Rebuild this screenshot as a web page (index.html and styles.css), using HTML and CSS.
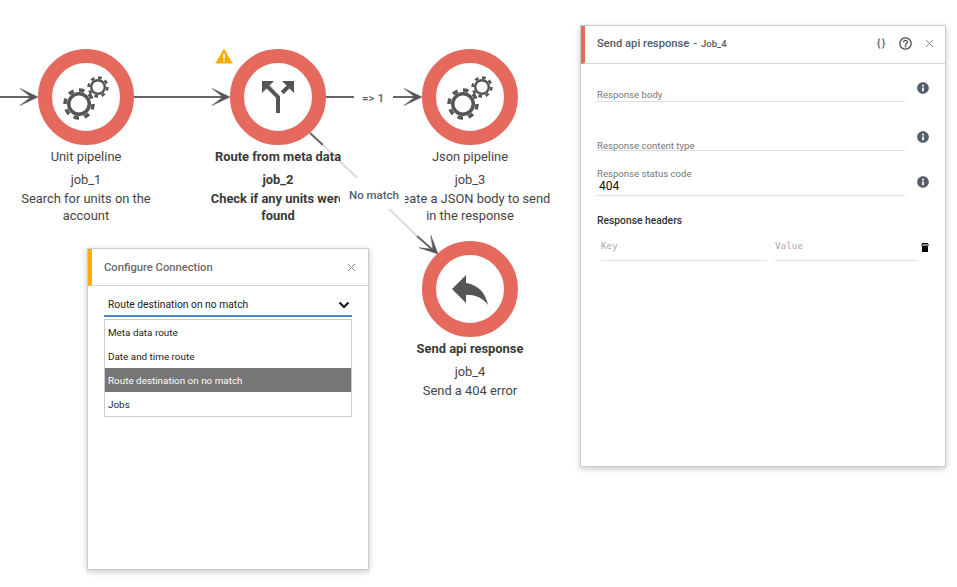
FILE: index.html
```html
<!DOCTYPE html>
<html lang="en">
<head>
<meta charset="utf-8">
<title>Pipeline editor</title>
<link rel="stylesheet" href="styles.css">
</head>
<body>
<main class="canvas">
  <svg class="edges" width="957" height="587" viewBox="0 0 957 587" aria-hidden="true">
    <defs>
      <path id="arrow" d="M0 0L-18-8.500-7 0-18 8.500Z"/>
      <g id="gears">
        <circle cx="24" cy="35" r="10.250" class="gear-ring" stroke-width="3.500"/>
        <circle cx="24" cy="35" r="14" class="gear-teeth" stroke-width="3.500" pathLength="16" stroke-dasharray="1 1"/>
        <circle cx="43" cy="18" r="6.800" class="gear-ring" stroke-width="2.400"/>
        <circle cx="43" cy="18" r="9.400" class="gear-teeth" stroke-width="2.600" pathLength="16" stroke-dasharray="1 1"/>
      </g>
    </defs>
    <line class="edge" x1="0" y1="97" x2="34" y2="97"/>
    <use href="#arrow" class="tip" transform="translate(38 97)"/>
    <line class="edge" x1="134" y1="97" x2="226" y2="97"/>
    <use href="#arrow" class="tip" transform="translate(230 97)"/>
    <line class="edge" x1="326" y1="97" x2="354" y2="97"/>
    <line class="edge" x1="393" y1="97" x2="418" y2="97"/>
    <use href="#arrow" class="tip" transform="translate(422 97)"/>
    <line class="edge" x1="310" y1="133" x2="323" y2="145"/>
    <line class="edge-faded" x1="323" y1="145" x2="417" y2="236"/>
    <line class="edge" x1="417" y1="236" x2="434" y2="251"/>
    <use href="#arrow" class="tip" transform="translate(438 254) rotate(43.6)"/>
  </svg>

  <article class="node node-1">
    <div class="ring">
      <svg class="node-icon" width="64" height="56" viewBox="0 0 64 56" aria-hidden="true">
        <use href="#gears"/>
      </svg>
    </div>
    <h3 class="node-name">Unit pipeline</h3>
    <p class="node-id">job_1</p>
    <p class="node-desc">Search for units on the account</p>
  </article>

  <article class="node node-2 is-selected">
    <div class="ring">
      <svg width="48" height="48" viewBox="0 0 24 24" class="glyph" aria-hidden="true">
        <path d="M14 4l2.290 2.290-2.880 2.880 1.420 1.420 2.880-2.880L20 10V4zm-4 0H4v6l2.290-2.290 4.710 4.700V20h2v-8.410l-5.290-5.300z"/>
      </svg>
    </div>
    <h3 class="node-name">Route from meta data</h3>
    <p class="node-id">job_2</p>
    <p class="node-desc">Check if any units were found</p>
  </article>

  <article class="node node-3">
    <div class="ring">
      <svg class="node-icon" width="64" height="56" viewBox="0 0 64 56" aria-hidden="true">
        <use href="#gears"/>
      </svg>
    </div>
    <h3 class="node-name">Json pipeline</h3>
    <p class="node-id">job_3</p>
    <p class="node-desc">Create a JSON body to send in the response</p>
  </article>

  <article class="node node-4">
    <div class="ring">
      <svg width="48" height="48" viewBox="0 0 24 24" class="glyph" aria-hidden="true">
        <path d="M10 9V5l-7 7 7 7v-4.100c5 0 8.500 1.600 11 5.100-1-5-4-10-11-11z"/>
      </svg>
    </div>
    <h3 class="node-name strong">Send api response</h3>
    <p class="node-id">job_4</p>
    <p class="node-desc">Send a 404 error</p>
  </article>

  <svg class="warning" width="18" height="16" viewBox="0 0 18 16" aria-hidden="true">
    <path d="M9 0.500L17.800 15.500H0.200Z" fill="#ffab00"/>
    <rect x="8.100" y="5.500" width="1.800" height="5" fill="#fff"/>
    <rect x="8.100" y="11.600" width="1.800" height="1.800" fill="#fff"/>
  </svg>

  <span class="edge-label label-one">=&gt; 1</span>
  <span class="edge-label label-nomatch">No match</span>

  <section class="panel connection-panel">
    <header class="panel-head accent-amber">
      <h2 class="panel-title muted">Configure Connection</h2>
      <svg class="close" width="9" height="9" viewBox="0 0 9 9" aria-hidden="true"><path d="M1 1l7 7M8 1L1 8"/></svg>
    </header>
    <div class="connection-body">
      <div class="select">
        <span>Route destination on no match</span>
        <svg width="12" height="8" viewBox="0 0 12 8" aria-hidden="true"><path class="chevron" d="M1.500 1.500L6 6l4.500-4.500"/></svg>
      </div>
      <ul class="options">
        <li>Meta data route</li>
        <li>Date and time route</li>
        <li class="active">Route destination on no match</li>
        <li>Jobs</li>
      </ul>
    </div>
  </section>

  <section class="panel details-panel">
    <header class="panel-head accent-red details-head">
      <h2 class="panel-title">Send api response<span class="title-sep">-</span><small class="title-job">Job_4</small></h2>
      <div class="head-tools">
        <span class="braces">{}</span>
        <svg width="15" height="15" viewBox="0 0 24 24" class="tool-help" aria-hidden="true"><path d="M11 18h2v-2h-2v2zm1-16C6.480 2 2 6.480 2 12s4.480 10 10 10 10-4.480 10-10S17.520 2 12 2zm0 18c-4.410 0-8-3.590-8-8s3.590-8 8-8 8 3.590 8 8-3.590 8-8 8zm0-14c-2.210 0-4 1.790-4 4h2c0-1.100.9-2 2-2s2 .9 2 2c0 2-3 1.750-3 5h2c0-2.250 3-2.500 3-5 0-2.210-1.790-4-4-4z"/></svg>
        <svg class="close" width="9" height="9" viewBox="0 0 9 9" aria-hidden="true"><path d="M1 1l7 7M8 1L1 8"/></svg>
      </div>
    </header>
    <div class="details-body">
      <div class="row">
        <div class="field field-a"><label>Response body</label></div>
        <svg class="info info-a" width="14" height="14" viewBox="0 0 24 24" aria-hidden="true"><path d="M12 2C6.480 2 2 6.480 2 12s4.480 10 10 10 10-4.480 10-10S17.520 2 12 2zm1.500 15.500h-3v-6.500h3v6.500zm0-8h-3V6.500h3v3z"/></svg>
      </div>
      <div class="row">
        <div class="field field-b"><label>Response content type</label></div>
        <svg class="info info-b" width="14" height="14" viewBox="0 0 24 24" aria-hidden="true"><path d="M12 2C6.480 2 2 6.480 2 12s4.480 10 10 10 10-4.480 10-10S17.520 2 12 2zm1.500 15.500h-3v-6.500h3v6.500zm0-8h-3V6.500h3v3z"/></svg>
      </div>
      <div class="row">
        <div class="field field-c"><label>Response status code</label><span class="value">404</span></div>
        <svg class="info info-c" width="14" height="14" viewBox="0 0 24 24" aria-hidden="true"><path d="M12 2C6.480 2 2 6.480 2 12s4.480 10 10 10 10-4.480 10-10S17.520 2 12 2zm1.500 15.500h-3v-6.500h3v6.500zm0-8h-3V6.500h3v3z"/></svg>
      </div>
      <h4 class="section-title">Response headers</h4>
      <div class="kv-row">
        <span class="kv kv-key">Key</span>
        <span class="kv kv-value">Value</span>
        <svg class="trash" width="8" height="9" viewBox="0 0 8 9" aria-hidden="true"><path d="M1 0h6v1H1zM0 1.500h8v1H0zM1 3h6v6H1z"/></svg>
      </div>
    </div>
  </section>
</main>
</body>
</html>
```
FILE: styles.css
```css
* { box-sizing: border-box; }

html, body {
  margin: 0;
  padding: 0;
  background: #fff;
}

body {
  font-family: Roboto, "Liberation Sans", sans-serif;
  color: #444;
}

.canvas {
  position: relative;
  width: 957px;
  height: 587px;
  overflow: hidden;
}

.edges {
  position: absolute;
  left: 0;
  top: 0;
}

.edge {
  stroke: #666;
  stroke-width: 2;
}

.edge-faded {
  stroke: #ddd;
  stroke-width: 2;
}

.tip {
  fill: #555;
  stroke: #555;
  stroke-width: 0.5;
}

.gear-ring,
.gear-teeth {
  fill: none;
  stroke: #555;
}

/* Diagram nodes */
.node {
  position: absolute;
  width: 160px;
  text-align: center;
  font-size: 12.900px;
  line-height: 17px;
}

.node-1 { left: 6px; top: 49px; }
.node-2 { left: 198px; top: 49px; }
.node-3 { left: 386px; top: 49px; width: 168px; }
.node-4 { left: 390px; top: 241px; }

.ring {
  width: 96px;
  height: 96px;
  margin: 0 auto;
  border: 14px solid #e5695c;
  border-radius: 50%;
  background: #fff;
  display: flex;
  align-items: center;
  justify-content: center;
}

.glyph { fill: #555; flex: none; }
.node-icon { flex: none; margin-left: 2px; }

.node-name {
  margin: 3px 0 0;
  font-size: 12.900px;
  font-weight: 400;
  line-height: 17px;
}

.node-id {
  margin: 6px 0 0;
}

.node-desc {
  margin: 2px 0 0;
}

.is-selected .node-name,
.is-selected .node-id,
.is-selected .node-desc,
.node-name.strong {
  font-weight: 700;
  color: #3a3a3a;
}

.warning {
  position: absolute;
  left: 215px;
  top: 48px;
}

.edge-label {
  position: absolute;
  background: #fff;
  color: #55606c;
  font-size: 11.500px;
  font-weight: 500;
  text-align: center;
}

.label-one {
  left: 354px;
  top: 88px;
  width: 39px;
  height: 20px;
  line-height: 20px;
  padding-right: 1px;
}

.label-nomatch {
  left: 340px;
  top: 178px;
  width: 65px;
  height: 31px;
  line-height: 35px;
  padding-left: 3px;
}

/* Floating panels */
.panel {
  position: absolute;
  background: #fff;
  border: 1px solid #ccc;
  box-shadow: 0 2px 6px rgba(0, 0, 0, 0.22);
}

.connection-panel {
  left: 87px;
  top: 248px;
  width: 282px;
  height: 322px;
}

.details-panel {
  left: 580px;
  top: 25px;
  width: 366px;
  height: 442px;
}

.panel-head {
  display: flex;
  align-items: center;
  justify-content: space-between;
  height: 37px;
  border-bottom: 1px solid #d6d6d6;
  border-left: 4px solid;
  padding: 0 12px 0 12px;
}

.accent-amber { border-left-color: #ffab00; }
.accent-red { border-left-color: #e5695c; }

.details-head {
  height: 38px;
  padding-right: 11px;
  padding-bottom: 2px;
}

.panel-title {
  margin: 0;
  font-size: 11.200px;
  font-weight: 500;
  color: #4f5b66;
  white-space: nowrap;
}

.panel-title.muted { color: #6a6a6a; }

.title-sep {
  margin: 0 4px 0 4px;
}

.title-job {
  font-size: 9.500px;
  font-weight: 500;
}

.close {
  fill: none;
  stroke: #888;
  stroke-width: 1;
  flex: none;
}

.head-tools {
  display: flex;
  align-items: center;
}

.braces {
  font-size: 11px;
  font-weight: 500;
  color: #566878;
  letter-spacing: 1.500px;
  margin-right: 11px;
}

.tool-help {
  fill: #555;
  stroke: #555;
  stroke-width: 0.300;
  margin-right: 12px;
}

/* Connection form */
.connection-body {
  padding: 0 16px;
}

.select {
  display: flex;
  align-items: center;
  justify-content: space-between;
  height: 31px;
  padding: 8px 2px 0 4px;
  border-bottom: 2px solid #4a86c0;
  font-size: 10.300px;
  color: #222;
}

.chevron {
  fill: none;
  stroke: #111;
  stroke-width: 2.200;
}

.options {
  list-style: none;
  margin: 2px 0 0;
  padding: 0;
  border: 1px solid #ccc;
}

.options li {
  height: 24px;
  line-height: 24px;
  padding: 1px 3px 0;
  font-size: 9.900px;
  color: #222;
}

.options li.active {
  background: #767676;
  color: #fff;
}

/* Details form */
.details-body {
  padding: 0 16px;
}

.row {
  display: flex;
  align-items: flex-start;
}

.field {
  flex: none;
  width: 308px;
  display: flex;
  flex-direction: column;
  justify-content: flex-end;
  border-bottom: 1px solid #ddd;
  font-size: 9.600px;
  color: #777;
}

.field label { line-height: 12px; }

.field-a { height: 38px; }
.field-b { height: 49px; }
.field-c { height: 45px; }

.field-b label { margin-bottom: -2px; }
.field-c label { margin-bottom: -1px; }

.value {
  font-size: 12px;
  line-height: 14px;
  color: #111;
  padding: 0 0 2px 2px;
}

.info {
  fill: #555e66;
  flex: none;
  margin-left: 11px;
}

.info-a { margin-top: 17px; }
.info-b { margin-top: 28px; }
.info-c { margin-top: 24px; }

.section-title {
  margin: 18px 0 0;
  font-size: 10.300px;
  line-height: 13px;
  font-weight: 500;
  color: #333;
}

.kv-row {
  display: flex;
  align-items: flex-start;
  margin: 9px 0 0 4px;
}

.kv {
  display: block;
  height: 25px;
  padding-top: 3px;
  border-bottom: 1px solid #ddd;
  font-family: "DejaVu Sans Mono", "Liberation Mono", monospace;
  font-size: 9.300px;
  line-height: 14px;
  color: #aaa;
}

.kv-key { width: 166px; }
.kv-value { width: 143px; margin-left: 8px; }

.trash {
  fill: #000;
  margin: 7px 0 0 3px;
  flex: none;
}
```
